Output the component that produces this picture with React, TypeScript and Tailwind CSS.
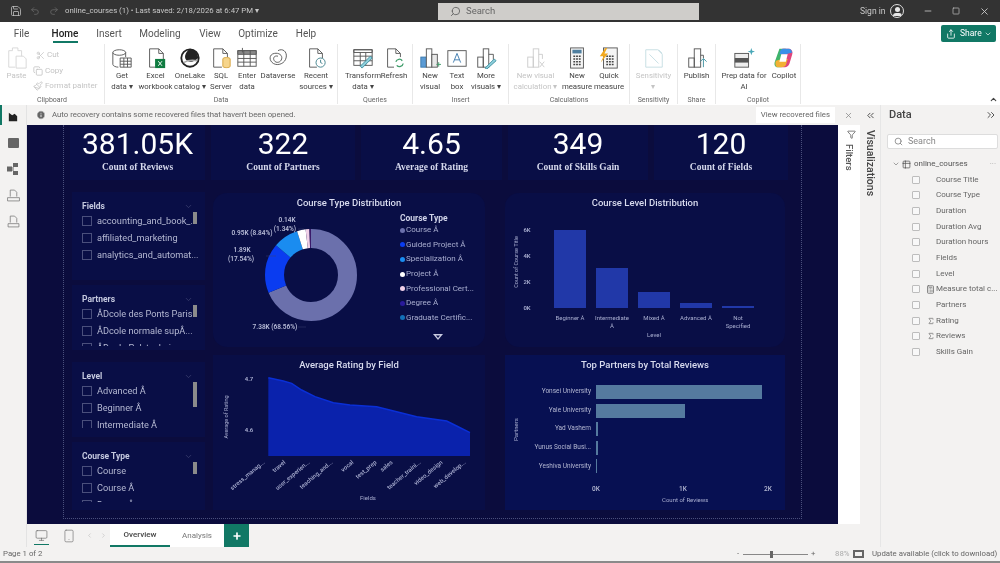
import type { ReactNode } from "react";
import { ChevronDown, ChevronUp, ChevronsLeft, ChevronsRight, ChevronRight, ChevronLeft, Copy, Filter, Info, Minus, Monitor, Paintbrush, Plus, Redo2, Save, Scissors, Search, Sigma, Smartphone, Square, Table2, Undo2, X, Calculator, Share } from "lucide-react";

const ui = "font-['Roboto',sans-serif]";

function Ic({ children, className = "" }: { children: ReactNode; className?: string }) {
  return (
    <svg viewBox="0 0 24 24" fill="none" stroke="#555" strokeWidth="1" className={`h-[22px] w-[22px] ${className}`}>
      {children}
    </svg>
  );
}

const icons: Record<string, ReactNode> = {
  paste: (
    <Ic className="opacity-40">
      <path d="M3 4h4V1h6v3h4v6" stroke="#999" />
      <path d="M3 4v18h7" stroke="#999" />
      <path d="M11 10h8l3 3v10H11z" stroke="#999" />
    </Ic>
  ),
  get: (
    <Ic>
      <ellipse cx="9" cy="6" rx="7" ry="3" />
      <path d="M2 6v13c0 1.500 3 3 6 3M16 6v5" />
      <path d="M10 12h12v10H10zM10 15.500h12M10 18.800h12M14 12v10M18 12v10" />
    </Ic>
  ),
  excel: (
    <Ic>
      <path d="M5 2h10l5 5v10M15 2v5h5M5 2v20h6" />
      <rect x="11" y="13" width="11" height="10" fill="#107c41" stroke="none" />
      <path d="M14.500 15.500l4 5M18.500 15.500l-4 5" stroke="#fff" />
    </Ic>
  ),
  onelake: (
    <Ic>
      <circle cx="12" cy="12" r="9.500" stroke="#222" strokeWidth="2" />
      <path d="M12 2c-6 4-7 11-3 13s8 1 12-3c-1-6-4-9-9-10z" fill="#222" stroke="none" />
      <path d="M5 17c5-3 10-3 15-2" stroke="#aaa" strokeWidth="1.500" />
    </Ic>
  ),
  sql: (
    <Ic>
      <path d="M4 2h10l5 5v4M14 2v5h5M4 2v20h9" />
      <path d="M14 13c0-2 8-2 8 0v8c0 2-8 2-8 0z" fill="#f6d58c" stroke="#d4a23c" />
    </Ic>
  ),
  enter: (
    <Ic>
      <rect x="2" y="4" width="20" height="17" />
      <path d="M2 4h20v4H2z" fill="#8a8a8a" />
      <path d="M2 12.500h20M2 16.500h20M8.500 4v17M15.500 4v17M7 1v5" />
    </Ic>
  ),
  dataverse: (
    <Ic>
      <path d="M12 4c5-3 10 1 9 7-1 7-9 10-14 7S2 8 8 7c5-1 9 2 8 6s-6 5-8 2 0-6 4-5" />
    </Ic>
  ),
  recent: (
    <Ic>
      <path d="M5 2h9l5 5v5M14 2v5h5M5 2v20h8" />
      <circle cx="17" cy="17" r="5" stroke="#3d7f8a" />
      <path d="M17 14v3l2 1" stroke="#3d7f8a" />
    </Ic>
  ),
  transform: (
    <Ic>
      <rect x="2" y="3" width="20" height="17" />
      <path d="M2 3h20v3H2zM2 10h20M2 15h20M9 6v14M15 6v14" />
      <path d="M9 21l11-11 2 2-11 11z" fill="#8fd0dc" stroke="#3d8fa0" />
    </Ic>
  ),
  refresh: (
    <Ic>
      <path d="M5 2h9l5 5v4M14 2v5h5M5 2v20h7" />
      <path d="M14 16a4 4 0 0 1 7-1M22 18a4 4 0 0 1-7 2" stroke="#3f9d6a" strokeWidth="1.400" />
    </Ic>
  ),
  newVisual: (
    <Ic>
      <rect x="2" y="11" width="6" height="11" fill="#5b9bd5" stroke="#3a78ad" />
      <rect x="8" y="2" width="6" height="20" fill="#fff" />
      <rect x="14" y="8" width="6" height="14" fill="#e8e8e8" />
      <path d="M19 19h5M21.500 16.500v5" stroke="#3f9d6a" />
    </Ic>
  ),
  textBox: (
    <Ic>
      <rect x="2" y="4" width="20" height="17" />
      <path d="M8 17l4-10 4 10M9.500 14h5" stroke="#3a78ad" />
    </Ic>
  ),
  moreVisuals: (
    <Ic>
      <rect x="3" y="11" width="6" height="11" />
      <rect x="9" y="2" width="6" height="20" />
      <path d="M15 8h5v6" />
      <path d="M11 23l10-10 2 2-10 9z" fill="#8fd0dc" stroke="#3d8fa0" />
    </Ic>
  ),
  calcVisual: (
    <Ic className="opacity-30">
      <rect x="3" y="11" width="6" height="11" />
      <rect x="9" y="2" width="6" height="20" />
      <path d="M15 8h4v5M16 16l5 6M21 16l-5 6" />
    </Ic>
  ),
  measure: (
    <Ic>
      <rect x="5" y="1" width="14" height="22" fill="#f5f5f5" />
      <rect x="7" y="3" width="10" height="4" fill="#4f7fa0" stroke="none" />
      <path d="M8 10h2M11 10h2M14 10h2M8 13h2M11 13h2M14 13h2M8 16h2M11 16h2M14 16h2M8 19h2M11 19h2M14 19h2" stroke="#444" strokeWidth="1.600" />
    </Ic>
  ),
  quick: (
    <Ic>
      <rect x="6" y="1" width="15" height="22" fill="#f5f5f5" />
      <path d="M9 10h2M12 10h2M15 10h2M9 13h2M12 13h2M15 13h2M9 16h2M12 16h2M15 16h2M9 19h2M12 19h2M15 19h2" stroke="#444" strokeWidth="1.600" />
      <path d="M8 1L2 10h4l-3 7 8-10H7l3-6z" fill="#f2a91e" stroke="none" />
    </Ic>
  ),
  sensitivity: (
    <Ic className="opacity-30">
      <path d="M3 3h13l5 5v14H3z" stroke="#3d8fa0" />
      <path d="M7 8l10 10M17 3l4 4" stroke="#3d8fa0" />
    </Ic>
  ),
  publish: (
    <Ic>
      <rect x="3" y="12" width="6" height="10" />
      <rect x="9" y="2" width="7" height="20" />
      <path d="M16 9h3v3" />
      <path d="M19 22v-9M15.500 16l3.500-3.500 3.500 3.500" stroke="#3d8fa0" />
    </Ic>
  ),
  prep: (
    <Ic>
      <rect x="2" y="7" width="15" height="15" fill="#eee" />
      <rect x="2" y="12" width="15" height="5" fill="#555" stroke="none" />
      <path d="M20 1l1 3 3 1-3 1-1 3-1-3-3-1 3-1z" fill="#4aa8b8" stroke="none" />
    </Ic>
  ),
  copilot: (
    <svg viewBox="0 0 24 24" className="h-[22px] w-[22px]">
      <path d="M7 2h7l-5 20H5C2 22 1 19 2 16z" fill="#3fb56a" />
      <path d="M10 2h7c3 0 5 3 4 6l-3 10c-1 3-3 4-5 4H9z" fill="#e0457b" />
      <path d="M8 4c1-2 3-2 5-2h4c2 0 3 1 4 4l-7 2H7z" fill="#3a8fe8" />
      <path d="M3 15l7-2h6l-2 7c-1 2-3 2-5 2H5c-2 0-3-3-2-7z" fill="#f2b134" />
      <path d="M9 8h7l-2 8H7z" fill="#fff" />
    </svg>
  ),
};

function RibbonBtn({ icon, lines, w, off }: { icon: string; lines: string[]; w: string; off?: boolean }) {
  return (
    <div className={`flex flex-col items-center ${w}`}>
      <div className="mt-[3px] flex h-[22px] items-center">{icons[icon]}</div>
      <div className={`mt-[2px] text-center text-[7.8px] leading-[10.5px] whitespace-nowrap ${off ? "text-[#c4c4c4]" : "text-[#444]"}`}>
        {lines.map((l) => (
          <div key={l}>{l}</div>
        ))}
      </div>
    </div>
  );
}

function Group({ label, w, children, className = "" }: { label: string; w: string; children: ReactNode; className?: string }) {
  return (
    <div className={`relative flex h-[60px] shrink-0 border-r border-[#e8e8e8] ${w} ${className}`}>
      {children}
      <div className="absolute right-0 bottom-[-1px] left-0 text-center text-[7px] leading-[10px] text-[#666]">{label}</div>
    </div>
  );
}

function TitleBar() {
  return (
    <div className={`flex h-[22px] shrink-0 items-center bg-[#333333] text-[#c8c8c8] ${ui}`}>
      <Save className="ml-[10px] h-[12px] w-[12px]" strokeWidth={1.5} />
      <Undo2 className="ml-[8px] h-[10px] w-[10px] text-[#666]" />
      <Redo2 className="ml-[9px] h-[10px] w-[10px] text-[#666]" />
      <span className="ml-[6px] w-[193px] text-[7.8px] whitespace-nowrap">online_courses (1) • Last saved: 2/18/2026 at 6:47 PM ▾</span>
      <div className="ml-[180px] flex h-[17px] w-[261px] items-center bg-[#cfcdca] text-[#666]">
        <Search className="ml-[12px] h-[11px] w-[11px] -scale-x-100" />
        <span className="ml-[5px] text-[9.5px]">Search</span>
      </div>
      <span className="ml-[161px] w-[24px] text-[8.5px] whitespace-nowrap">Sign in</span>
      <div className="ml-[6px] flex h-[14px] w-[14px] items-center justify-center overflow-hidden rounded-full border border-[#ddd] bg-[#333]">
        <div className="flex flex-col items-center gap-[1px]">
          <div className="h-[5px] w-[5px] rounded-full bg-[#e8e8e8]" />
          <div className="h-[3px] w-[9px] rounded-t-full bg-[#e8e8e8]" />
        </div>
      </div>
      <Minus className="ml-[19px] h-[10px] w-[10px]" />
      <Square className="ml-[19px] h-[8px] w-[8px]" />
      <X className="ml-[19px] h-[11px] w-[11px]" />
    </div>
  );
}

function Ribbon() {
  const tabs = [
    ["File", "w-[43px]"],
    ["Home", "w-[44px]"],
    ["Insert", "w-[44px]"],
    ["Modeling", "w-[58px]"],
    ["View", "w-[42px]"],
    ["Optimize", "w-[54px]"],
    ["Help", "w-[42px]"],
  ];
  return (
    <div className={`relative h-[83px] shrink-0 bg-white ${ui}`}>
      <div className="flex h-[22px] items-center">
        {tabs.map(([t, w]) => (
          <div key={t} className={`relative flex h-[22px] items-center justify-center text-[10px] ${w} ${t === "Home" ? "font-medium text-[#222]" : "text-[#555]"}`}>
            {t}
            {t === "Home" && <div className="absolute bottom-[1px] left-[10px] h-[2px] w-[25px] bg-[#117865]" />}
          </div>
        ))}
        <div className="mt-[1px] mr-[4px] ml-auto flex h-[17px] w-[55px] items-center gap-[4px] rounded-[2px] bg-[#117865] pl-[5px] text-[8.5px] text-white">
          <Share className="h-[10px] w-[10px]" />
          Share
          <ChevronDown className="ml-[-2px] h-[8px] w-[8px]" />
        </div>
      </div>
      <div className="flex">
        <Group label="Clipboard" w="w-[105px]">
          <div className="flex w-[33px] flex-col items-center">
            <div className="mt-[3px] flex h-[22px] items-center">{icons.paste}</div>
            <div className="mt-[2px] text-[7.8px] leading-[10.5px] text-[#c4c4c4]">Paste</div>
          </div>
          <div className="mt-[5px] flex flex-col gap-[3.500px] text-[8px] leading-[12px] text-[#c4c4c4]">
            <div className="flex items-center gap-[2px] pl-[3px]">
              <Scissors className="h-[9px] w-[9px]" />
              Cut
            </div>
            <div className="flex items-center gap-[2px]">
              <Copy className="h-[10px] w-[10px]" />
              Copy
            </div>
            <div className="flex items-center gap-[2px] whitespace-nowrap">
              <Paintbrush className="h-[10px] w-[10px]" />
              Format painter
            </div>
          </div>
        </Group>
        <Group label="Data" w="w-[233px]">
          <RibbonBtn icon="get" lines={["Get", "data ▾"]} w="w-[34px]" />
          <RibbonBtn icon="excel" lines={["Excel", "workbook"]} w="w-[33px]" />
          <RibbonBtn icon="onelake" lines={["OneLake", "catalog ▾"]} w="w-[36px]" />
          <RibbonBtn icon="sql" lines={["SQL", "Server"]} w="w-[26px]" />
          <RibbonBtn icon="enter" lines={["Enter", "data"]} w="w-[26px]" />
          <RibbonBtn icon="dataverse" lines={["Dataverse"]} w="w-[36px]" />
          <RibbonBtn icon="recent" lines={["Recent", "sources ▾"]} w="w-[40px]" />
        </Group>
        <Group label="Queries" w="w-[75px]" className="pl-[7px]">
          <RibbonBtn icon="transform" lines={["Transform", "data ▾"]} w="w-[36px]" />
          <RibbonBtn icon="refresh" lines={["Refresh"]} w="w-[26px]" />
        </Group>
        <Group label="Insert" w="w-[96px]">
          <RibbonBtn icon="newVisual" lines={["New", "visual"]} w="w-[34px]" />
          <RibbonBtn icon="textBox" lines={["Text", "box"]} w="w-[20px]" />
          <RibbonBtn icon="moreVisuals" lines={["More", "visuals ▾"]} w="w-[38px]" />
        </Group>
        <Group label="Calculations" w="w-[121px]">
          <RibbonBtn icon="calcVisual" lines={["New visual", "calculation ▾"]} w="w-[53px]" off />
          <RibbonBtn icon="measure" lines={["New", "measure"]} w="w-[30px]" />
          <RibbonBtn icon="quick" lines={["Quick", "measure"]} w="w-[34px]" />
        </Group>
        <Group label="Sensitivity" w="w-[48px]">
          <RibbonBtn icon="sensitivity" lines={["Sensitivity", "▾"]} w="w-[47px]" off />
        </Group>
        <Group label="Share" w="w-[38px]">
          <RibbonBtn icon="publish" lines={["Publish"]} w="w-[37px]" />
        </Group>
        <Group label="Copilot" w="w-[85px]">
          <RibbonBtn icon="prep" lines={["Prep data for", "AI"]} w="w-[56px]" />
          <RibbonBtn icon="copilot" lines={["Copilot"]} w="w-[24px]" />
        </Group>
      </div>
      <ChevronUp className="absolute right-[2px] bottom-[1px] h-[9px] w-[9px] text-[#444]" strokeWidth={3} />
    </div>
  );
}

function LeftNav() {
  const cell = "flex h-[26px] w-full items-center justify-center";
  return (
    <div className="relative flex w-[27px] shrink-0 flex-col items-center border-r border-[#e3e3e3] bg-[#f3f2f1]">
      <div className="absolute top-0 left-0 h-[20px] w-[2px] bg-[#117865]" />
      <div className="mt-[-1px] flex w-full flex-col">
        <div className={cell}>
          <svg viewBox="0 0 12 12" className="h-[10px] w-[10px]">
            <path d="M1 1l4 3 3-2 3 3v6H1z" fill="#222" />
          </svg>
        </div>
        <div className={cell}>
          <div className="h-[10px] w-[11px] rounded-[1px] bg-[#666]" />
        </div>
        <div className={cell}>
          <svg viewBox="0 0 12 12" className="h-[12px] w-[12px]">
            <rect x="6" y="0" width="5" height="4" fill="#666" />
            <rect x="0" y="3.500" width="5" height="5" fill="#666" />
            <rect x="6" y="8" width="5" height="4" fill="#666" />
            <path d="M5 5h2M5 7h2" stroke="#666" />
          </svg>
        </div>
        <div className={cell}>
          <svg viewBox="0 0 12 12" fill="none" stroke="#777" strokeWidth="0.7" className="h-[13px] w-[13px]">
            <path d="M3 7V1h4l2 2v4M0.500 8h11v3h-11z" />
          </svg>
        </div>
        <div className={cell}>
          <svg viewBox="0 0 12 12" fill="none" stroke="#777" strokeWidth="0.7" className="h-[13px] w-[13px]">
            <path d="M3 7V1h4l2 2v4M1 8h10v3H1z" />
          </svg>
        </div>
      </div>
    </div>
  );
}

function Kpi({ value, label, w }: { value: string; label: string; w: string }) {
  return (
    <div className={`flex h-[55px] shrink-0 flex-col items-center bg-[#090e46] ${w}`}>
      <div className={`mt-[2px] h-[34px] text-[30px] leading-[34px] text-white ${ui}`}>{value}</div>
      <div className="text-[9.5px] leading-[13px] font-bold whitespace-nowrap text-[#d5d8ec] font-['Liberation_Serif',serif]">{label}</div>
    </div>
  );
}

function Slicer({
  title,
  items,
  h,
  rowsH,
  scroll,
  className = "",
}: {
  title: string;
  items: string[];
  h: string;
  rowsH: string;
  scroll: string;
  className?: string;
}) {
  return (
    <div className={`w-[133px] bg-[#090e46] pt-[9px] pl-[10px] ${h} ${className} ${ui}`}>
      <div className="flex h-[11px] items-center">
        <span className="w-[102px] text-[8.5px] font-bold text-[#c5c9df]">{title}</span>
        <ChevronDown className="h-[9px] w-[9px] text-[#3d4272]" />
      </div>
      <div className="flex">
        <div className={`w-[118px] shrink-0 overflow-hidden ${rowsH}`}>
          {items.map((t) => (
            <div key={t} className="flex h-[17px] items-center gap-[5px]">
              <div className="h-[10px] w-[10px] shrink-0 border border-[#4a4f7c]" />
              <span className="text-[9.2px] whitespace-nowrap text-[#b4b8d2]">{t}</span>
            </div>
          ))}
        </div>
        {/* the scrollbar sits over the long labels, as it does in the slicer */}
        <div className={`ml-[-7px] w-[4px] shrink-0 bg-[#8b8b8b] ${scroll}`} />
      </div>
    </div>
  );
}

const legend = [
  ["Course Â", "bg-[#6b70ac]"],
  ["Guided Project Â", "bg-[#0a3cf0]"],
  ["Specialization Â", "bg-[#1a8cf0]"],
  ["Project Â", "bg-white"],
  ["Professional Cert...", "bg-[#f0d0e8]"],
  ["Degree Â", "bg-[#2a1a9a]"],
  ["Graduate Certific...", "bg-[#1270b8]"],
];

const donut = [
  [68.56, "#6b70ac"],
  [17.54, "#0a3cf0"],
  [8.84, "#1a8cf0"],
  [3.0, "#ffffff"],
  [1.34, "#f0d0e8"],
  [0.72, "#3a1a6a"],
] as const;

function CardTitle({ children }: { children: ReactNode }) {
  return <div className={`flex h-[20px] items-center justify-center text-[9.5px] font-medium text-[#d8dbee] ${ui}`}>{children}</div>;
}

function DonutCard() {
  const r = 36.5;
  const c = 2 * Math.PI * r;
  let acc = 0;
  return (
    <div className="h-[154px] rounded-[14px] bg-[#090e46]">
      <CardTitle>Course Type Distribution</CardTitle>
      <div className="flex">
        <svg viewBox="213 213 184 134" className={`h-[134px] w-[184px] ${ui}`} fontSize="6.5" fontWeight="600" fill="#b9bdd8" textAnchor="middle">
          {donut.map(([p, color]) => {
            const len = (p / 100) * c;
            const el = (
              <circle
                key={color}
                cx="311"
                cy="275"
                r={r}
                fill="none"
                stroke={color}
                strokeWidth="19"
                strokeDasharray={`${len} ${c - len}`}
                strokeDashoffset={-acc}
                transform="rotate(-90 311 275)"
              />
            );
            acc += len;
            return el;
          })}
          <text x="287" y="222">0.14K</text>
          <text x="285" y="231">(1.34%)</text>
          <text x="252" y="235">0.95K (8.84%)</text>
          <text x="242" y="252">1.89K</text>
          <text x="241" y="261">(17.54%)</text>
          <text x="275" y="329">7.38K (68.56%)</text>
          <path d="M298 229h6M266 256h10M298 327h8" stroke="#3d4272" strokeWidth="0.5" />
        </svg>
        <div className={`relative w-[88px] ${ui}`}>
          <div className="pl-[3px] text-[8.5px] leading-[10px] font-bold text-[#d0d3e8]">Course Type</div>
          <div className="flex flex-col">
            {legend.map(([t, dot]) => (
              <div key={t} className="flex h-[14.6px] items-center gap-[1px] pl-[3px] text-[8px] whitespace-nowrap text-[#a9aed0]">
                <div className={`h-[5px] w-[5px] shrink-0 rounded-full ${dot}`} />
                {t}
              </div>
            ))}
          </div>
          <svg viewBox="0 0 10 6" className="mx-auto mt-[9px] h-[6px] w-[10px] translate-x-[-3px]">
            <path d="M0 0h10L5 6z" fill="#c8cbe0" />
            <path d="M3 1.500h4L5 4z" fill="#090e46" />
          </svg>
        </div>
      </div>
    </div>
  );
}

function LevelCard() {
  const bars = [
    [554, 230, "Beginner Â"],
    [596, 268, "Intermediate"],
    [638, 292, "Mixed Â"],
    [680, 303, "Advanced Â"],
    [722, 306, "Not"],
  ] as const;
  return (
    <div className="h-[154px] rounded-[14px] bg-[#090e46]">
      <CardTitle>Course Level Distribution</CardTitle>
      <svg viewBox="505 213 275 134" className={`h-[134px] w-[275px] ${ui}`} fontSize="6" fill="#a9aed0" textAnchor="middle">
        {bars.map(([x, y, label]) => (
          <g key={label}>
            <rect x={x} y={y} width="32" height={308 - y} fill="#2138a8" />
            <text x={x + 16} y="320">{label}</text>
          </g>
        ))}
        <text x="612" y="328">Â</text>
        <text x="738" y="328">Specified</text>
        <text x="654" y="337">Level</text>
        {[["6K", 232], ["4K", 258], ["2K", 284], ["0K", 310]].map(([t, y]) => (
          <text key={t} x="527" y={y} fontWeight="600">{t}</text>
        ))}
        <text x="0" y="0" fontSize="5.5" transform="translate(518 262) rotate(-90)">Count of Course Title</text>
      </svg>
    </div>
  );
}

function AreaCard() {
  const pts = [[805, 98], [850, 108], [875, 115], [905, 135], [945, 155], [1000, 173], [1050, 180], [1130, 185], [1190, 200], [1250, 215], [1340, 228], [1370, 243], [1410, 263]];
  const line = pts.map(([x, y]) => `${x / 3},${y / 3 + 345}`).join(" ");
  const ticks = [
    [265, "stress_manag..."], [286, "travel"], [310, "user_experien..."], [333, "teaching_and..."], [354, "vocal"], [377, "test_prep"], [393, "sales"], [421, "teacher_traini..."], [443, "video_design"], [466, "web_develop..."],
  ] as const;
  return (
    <div className="h-[155px] bg-[#090e46]">
      <CardTitle>Average Rating by Field</CardTitle>
      <svg viewBox="213 375 272 135" className={`h-[135px] w-[272px] ${ui}`} fontSize="6" fill="#a9aed0">
        <polygon points={`268.300,456 ${line} 470,456`} fill="#0a22ac" />
        <polyline points={line} fill="none" stroke="#0a2fd6" strokeWidth="1.500" />
        <text x="249" y="381" textAnchor="middle" fontWeight="600">4.7</text>
        <text x="249" y="432" textAnchor="middle" fontWeight="600">4.6</text>
        <text transform="translate(228 417) rotate(-90)" textAnchor="middle" fontSize="5.500">Average of Rating</text>
        {ticks.map(([x, t]) => (
          <text key={t} transform={`translate(${x} 463) rotate(-40)`} textAnchor="end" fontWeight="500">{t}</text>
        ))}
        <text x="368" y="500" textAnchor="middle">Fields</text>
      </svg>
    </div>
  );
}

function PartnersCard() {
  const rows = [
    ["Yonsei University", "w-[166px]"],
    ["Yale University", "w-[89px]"],
    ["Yad Vashem", "w-[2px]"],
    ["Yunus Social Busi...", "w-[2px]"],
    ["Yeshiva University", "w-[1px]"],
  ];
  return (
    <div className={`h-[155px] bg-[#071052] ${ui}`}>
      <CardTitle>Top Partners by Total Reviews</CardTitle>
      <div className="flex pt-[10px]">
        <div className="flex w-[21px] items-center justify-center">
          <span className="-rotate-90 text-[6px] text-[#a9aed0]">Partners</span>
        </div>
        <div className="flex flex-col gap-[4.6px]">
          {rows.map(([name, w]) => (
            <div key={name} className="flex h-[14px] items-center">
              <span className="w-[65px] text-right text-[6.5px] whitespace-nowrap text-[#b4b8d2]">{name}</span>
              <div className={`ml-[5px] h-full bg-[#557a9f] ${w}`} />
            </div>
          ))}
        </div>
      </div>
      <div className="mt-[12px] flex pl-[87px] text-[6.5px] leading-[8px] font-medium text-[#b4b8d2]">
        <span className="w-[87px]">0K</span>
        <span className="w-[85px]">1K</span>
        <span>2K</span>
      </div>
      <div className="mt-[3px] pl-[157px] text-[6px] leading-[8px] text-[#a9aed0]">Count of Reviews</div>
    </div>
  );
}

function Canvas() {
  return (
    <div className="h-[399px] w-[811px] shrink-0 overflow-hidden bg-[#0b0c3d] pl-[36px]">
      <div className="h-[394px] w-[739px] border-x border-b border-dotted border-[#4a4f7c]">
        <div className="flex gap-[6px] pl-[6px]">
          <Kpi value="381.05K" label="Count of Reviews" w="w-[135px]" />
          <Kpi value="322" label="Count of Partners" w="w-[144px]" />
          <Kpi value="4.65" label="Average of Rating" w="w-[141px]" />
          <Kpi value="349" label="Count of Skills Gain" w="w-[140px]" />
          <Kpi value="120" label="Count of Fields" w="w-[134px]" />
        </div>
        <div className="mt-[12px] flex pl-[8px]">
          <div className="flex flex-col gap-[5px]">
            <Slicer
              title="Fields"
              items={["accounting_and_book_..", "affiliated_marketing", "analytics_and_automat..."]}
              h="h-[88px]"
              rowsH="h-[51px]"
              scroll="h-[12px]"
            />
            <Slicer
              title="Partners"
              items={["ÂDcole des Ponts Paris..", "ÂDcole normale supÂ...", "ÂDcole Polytechnique"]}
              h="h-[65px]"
              rowsH="h-[41px]"
              scroll="h-[12px]"
            />
            <Slicer
              title="Level"
              items={["Advanced Â", "Beginner Â", "Intermediate Â"]}
              h="h-[75px]"
              rowsH="h-[46px]"
              scroll="h-[25px]"
              className="mt-[7px]"
            />
            <Slicer
              title="Course Type"
              items={["Course", "Course Â", "Degree Â"]}
              h="h-[68px]"
              rowsH="h-[40px]"
              scroll="h-[12px]"
            />
          </div>
          <div className="mt-[1px] ml-[8px] grid grid-cols-[272px_280px] gap-x-[20px] gap-y-[8px]">
            <DonutCard />
            <LevelCard />
            <AreaCard />
            <PartnersCard />
          </div>
        </div>
      </div>
    </div>
  );
}

function PageTabs() {
  return (
    <div className={`flex h-[23px] shrink-0 items-center bg-[#f3f2f1] ${ui}`}>
      <div className="relative ml-[7px] flex h-[23px] w-[14px] items-center justify-center">
        <Monitor className="h-[13px] w-[13px] text-[#666]" strokeWidth={1.2} />
        <div className="absolute bottom-[2px] h-[1px] w-[15px] bg-[#117865]" />
      </div>
      <Smartphone className="ml-[14px] h-[14px] w-[14px] text-[#777]" strokeWidth={1.2} />
      <ChevronLeft className="ml-[10px] h-[7px] w-[7px] text-[#bbb]" />
      <ChevronRight className="ml-[7px] h-[7px] w-[7px] text-[#bbb]" />
      <div className="ml-[3px] flex h-[23px] w-[60px] items-center justify-center border-b-2 border-[#117865] bg-white text-[8px] font-medium text-[#444]">Overview</div>
      <div className="flex h-[23px] w-[54px] items-center justify-center bg-white text-[8px] text-[#777]">Analysis</div>
      <div className="flex h-[23px] w-[25px] items-center justify-center bg-[#117865] text-white">
        <Plus className="h-[10px] w-[10px]" strokeWidth={4} />
      </div>
    </div>
  );
}

const fields: [string, "sigma" | "calc" | null][] = [
  ["Course Title", null],
  ["Course Type", null],
  ["Duration", null],
  ["Duration Avg", null],
  ["Duration hours", null],
  ["Fields", null],
  ["Level", null],
  ["Measure total c...", "calc"],
  ["Partners", null],
  ["Rating", "sigma"],
  ["Reviews", "sigma"],
  ["Skills Gain", null],
];

function DataPane() {
  return (
    <div className={`w-[120px] shrink-0 border-l border-[#e6e6e6] bg-[#f3f2f1] ${ui}`}>
      <div className="flex h-[20px] items-center pr-[3px] pl-[8px]">
        <span className="text-[11px] font-medium text-[#444]">Data</span>
        <ChevronsRight className="ml-auto h-[12px] w-[12px] text-[#555]" />
      </div>
      <div className="mt-[9px] ml-[6px] flex h-[15px] w-[111px] items-center rounded-[2px] border border-[#ddd] bg-white pl-[6px] text-[9px] text-[#888]">
        <Search className="h-[9px] w-[9px] text-[#777]" />
        <span className="ml-[5px]">Search</span>
      </div>
      <div className="mt-[7px] flex h-[16px] items-center pl-[11px] text-[8px] text-[#555]">
        <ChevronDown className="h-[8px] w-[8px] text-[#777]" />
        <Table2 className="ml-[2px] h-[9px] w-[9px] text-[#555]" />
        <span className="ml-[3px]">online_courses</span>
        <span className="ml-auto pr-[4px] text-[#aaa]">···</span>
      </div>
      <div className="flex flex-col">
        {fields.map(([name, kind]) => (
          <div key={name} className="flex h-[15.65px] items-center text-[8px] whitespace-nowrap text-[#666]">
            <div className="ml-[31px] h-[8px] w-[8px] shrink-0 rounded-[1px] border border-[#bdbdbd] bg-[#f8f8f8]" />
            <div className="flex w-[16px] justify-end pr-[1px]">
              {kind === "sigma" && <Sigma className="h-[8px] w-[8px] text-[#666]" />}
              {kind === "calc" && <Calculator className="h-[9px] w-[9px] text-[#666]" />}
            </div>
            <span>{name}</span>
          </div>
        ))}
      </div>
    </div>
  );
}

function StatusBar() {
  return (
    <div className={`flex h-[16px] shrink-0 items-center border-b-2 border-[#8a8a8a] bg-[#f3f2f1] text-[7.8px] whitespace-nowrap text-[#666] ${ui}`}>
      <span className="w-[737px] pl-[3px]">Page 1 of 2</span>
      <span className="w-[6px]">-</span>
      <div className="relative flex h-[8px] w-[65px] items-center">
        <div className="h-[1px] w-full bg-[#888]" />
        <div className="absolute left-[27px] h-[7px] w-[3px] bg-[#666]" />
      </div>
      <span className="ml-[3px] w-[24px]">+</span>
      <span className="w-[18px] text-[#aaa]">88%</span>
      <div className="h-[8px] w-[11px] border-2 border-[#666]" />
      <span className="ml-[8px]">Update available (click to download)</span>
    </div>
  );
}

export default function App() {
  return (
    <div className="flex h-[563px] w-[1000px] flex-col overflow-hidden bg-[#f3f2f1] blur-[0.5px]">
      <TitleBar />
      <Ribbon />
      <div className="flex h-[442px] shrink-0">
        <LeftNav />
        <div className="flex w-[833px] shrink-0 flex-col">
          <div className={`flex h-[20px] shrink-0 items-center bg-[#f3f2f1] text-[7.8px] text-[#666] ${ui}`}>
            <Info className="ml-[9px] h-[10px] w-[10px] fill-[#666] text-white" />
            <span className="ml-[6px]">Auto recovery contains some recovered files that haven't been opened.</span>
            <span className="ml-[auto] bg-white px-[5px] py-[2px]">View recovered files</span>
            <X className="mr-[7px] ml-[9px] h-[9px] w-[9px] text-[#888]" />
          </div>
          <div className="flex">
            <Canvas />
            <div className={`flex h-[399px] w-[22px] flex-col items-center bg-white pt-[5px] text-[#555] ${ui}`}>
              <Filter className="ml-[4px] h-[9px] w-[9px]" />
              <span className="mt-[5px] text-[9.5px] font-medium [writing-mode:vertical-rl]">Filters</span>
            </div>
          </div>
          <PageTabs />
        </div>
        <div className={`flex w-[20px] shrink-0 flex-col items-center bg-[#f3f2f1] text-[#444] ${ui}`}>
          <ChevronsLeft className="mt-[5px] h-[11px] w-[11px]" />
          <span className="mt-[9px] text-[10.5px] font-medium [writing-mode:vertical-rl]">Visualizations</span>
        </div>
        <DataPane />
      </div>
      <StatusBar />
    </div>
  );
}
